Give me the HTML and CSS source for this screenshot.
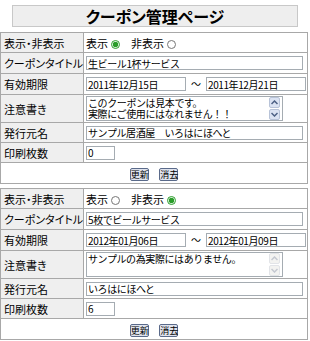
FILE: index.html
```html
<!DOCTYPE html>
<html lang="ja">
<head>
   <meta charset="UTF-8">
   <title>クーポン管理ページ</title>
   <link rel="stylesheet" href="styles.css">
</head>
<body>

<h1 class="page-title">クーポン管理ページ</h1>

<form class="coupon">
	<table class="coupon-table">
		<tr class="short">
			<th>表示・非表示</th>
			<td class="radios">
				<label>表示 <input type="radio" name="show1" checked></label>
				<label>非表示 <input type="radio" name="show1"></label>
			</td>
		</tr>
		<tr>
			<th>クーポンタイトル</th>
			<td><input class="text wide" type="text" value="生ビール1杯サービス"></td>
		</tr>
		<tr>
			<th>有効期限</th>
			<td>
				<div class="dates">
					<input class="text date" type="text" value="2011年12月15日">
					<span class="tilde">～</span>
					<input class="text date" type="text" value="2011年12月21日">
				</div>
			</td>
		</tr>
		<tr class="note-row">
			<th>注意書き</th>
			<td>
				<div class="note-box">
					<textarea class="note">このクーポンは見本です。
実際にご使用にはなれません！！</textarea>
					<div class="scroll">
						<span class="arrow"><svg width="7" height="5" viewBox="0 0 7 5"><path d="M0.5 4 L3.5 1 L6.5 4" fill="none" stroke="#4d6185" stroke-width="1.5"/></svg></span>
						<span class="arrow"><svg width="7" height="5" viewBox="0 0 7 5"><path d="M0.5 1 L3.5 4 L6.5 1" fill="none" stroke="#4d6185" stroke-width="1.5"/></svg></span>
					</div>
				</div>
			</td>
		</tr>
		<tr class="short">
			<th>発行元名</th>
			<td><input class="text wide" type="text" value="サンプル居酒屋　いろはにほへと"></td>
		</tr>
		<tr class="short">
			<th>印刷枚数</th>
			<td><input class="text count" type="text" value="0"></td>
		</tr>
		<tr class="button-row">
			<td class="buttons" colspan="2">
				<button type="button">更新</button>
				<button type="button">消去</button>
			</td>
		</tr>
	</table>
</form>

<form class="coupon">
	<table class="coupon-table">
		<tr class="short">
			<th>表示・非表示</th>
			<td class="radios">
				<label>表示 <input type="radio" name="show2"></label>
				<label>非表示 <input type="radio" name="show2" checked></label>
			</td>
		</tr>
		<tr>
			<th>クーポンタイトル</th>
			<td><input class="text wide" type="text" value="5枚でビールサービス"></td>
		</tr>
		<tr>
			<th>有効期限</th>
			<td>
				<div class="dates">
					<input class="text date" type="text" value="2012年01月06日">
					<span class="tilde">～</span>
					<input class="text date" type="text" value="2012年01月09日">
				</div>
			</td>
		</tr>
		<tr class="note-row">
			<th>注意書き</th>
			<td>
				<div class="note-box">
					<textarea class="note">サンプルの為実際にはありません。</textarea>
					<div class="scroll is-disabled">
						<span class="arrow"><svg width="7" height="5" viewBox="0 0 7 5"><path d="M0.5 4 L3.5 1 L6.5 4" fill="none" stroke="#c4c8d0" stroke-width="1.5"/></svg></span>
						<span class="arrow"><svg width="7" height="5" viewBox="0 0 7 5"><path d="M0.5 1 L3.5 4 L6.5 1" fill="none" stroke="#c4c8d0" stroke-width="1.5"/></svg></span>
					</div>
				</div>
			</td>
		</tr>
		<tr class="short">
			<th>発行元名</th>
			<td><input class="text wide" type="text" value="いろはにほへと"></td>
		</tr>
		<tr class="short">
			<th>印刷枚数</th>
			<td><input class="text count" type="text" value="6"></td>
		</tr>
		<tr class="button-row">
			<td class="buttons" colspan="2">
				<button type="button">更新</button>
				<button type="button">消去</button>
			</td>
		</tr>
	</table>
</form>

</body>
</html>
```

FILE: styles.css
```css
* {
    box-sizing: border-box;
}

html,
body {
    margin: 0;
    padding: 0;
    background: #fff;
    font-family: "Noto Sans CJK JP", "DejaVu Sans", sans-serif;
    color: #000;
}

.page-title {
    width: 286px;
    height: 22px;
    margin: 5px 0 0 12px;
    border: 1px solid #c8c8c8;
    background: #eeeeee;
    font-size: 16px;
    line-height: 20px;
    font-weight: bold;
    text-align: center;
    font-feature-settings: "palt";
}

/* table */
.coupon {
    margin: 0;
}

.coupon:first-of-type {
    margin-top: 5px;
}

.coupon + .coupon {
    margin-top: 4px;
}

.coupon-table {
    width: 308px;
    table-layout: fixed;
    border-collapse: collapse;
    font-size: 11px;
    line-height: 14px;
    font-feature-settings: "palt";
}

.coupon-table tr {
    height: 21px;
}

.coupon-table tr.short {
    height: 20px;
}

.coupon-table th,
.coupon-table td {
    padding: 0 0 0 2px;
    border: 1px solid #a8a8a8;
    vertical-align: middle;
}

.coupon-table th {
    width: 83px;
    padding-left: 3px;
    background: #efefef;
    font-weight: normal;
    text-align: left;
    white-space: nowrap;
}

.coupon-table .note-row {
    height: 28px;
}

/* fields */
.text {
    display: block;
    height: 14px;
    padding: 0 1px;
    border: 1px solid #a5acb2;
    font-family: inherit;
    font-size: 10px;
    line-height: 12px;
    letter-spacing: -0.4px;
}

.wide {
    width: 217px;
}

.date {
    width: 100px;
}

.count {
    width: 29px;
}

.dates {
    display: flex;
    align-items: center;
}

.tilde {
    width: 20px;
    font-size: 10px;
    text-align: center;
}

.radios label {
    margin-right: 8px;
}

.radios input {
    width: 9px;
    height: 9px;
    margin: 0 0 0 1px;
    vertical-align: -1px;
    accent-color: #2a9d2a;
}

/* textarea with its scroll arrows */
.note-box {
    display: flex;
    width: 197px;
    height: 25px;
    border: 1px solid #a5acb2;
}

.note {
    flex: 1;
    min-width: 0;
    height: 100%;
    padding: 0 1px;
    border: none;
    font-family: inherit;
    font-size: 10px;
    line-height: 11px;
    letter-spacing: -0.4px;
    resize: none;
    overflow: hidden;
}

.scroll {
    display: flex;
    flex-direction: column;
    gap: 1px;
    width: 11px;
    margin: 0 2px 0 0;
    padding: 0;
    background: #fff;
}

.arrow {
    display: flex;
    flex: 1;
    align-items: center;
    justify-content: center;
    border: 1px solid #b8c3d8;
    border-radius: 2px;
    background: #dbe3f3;
}

.is-disabled .arrow {
    border-color: #e2e4e8;
    background: #f3f3f1;
}

/* buttons */
.coupon-table td.buttons {
    padding: 0;
    text-align: center;
}

.coupon-table .button-row {
    height: 21px;
}

.buttons button {
    width: 19px;
    height: 13px;
    margin: 0 4px;
    padding: 0;
    border: 1px solid #5a6a8a;
    border-radius: 2px;
    background: #dfe3ee;
    font-family: inherit;
    font-size: 9px;
    line-height: 11px;
    vertical-align: middle;
    white-space: nowrap;
}
```
